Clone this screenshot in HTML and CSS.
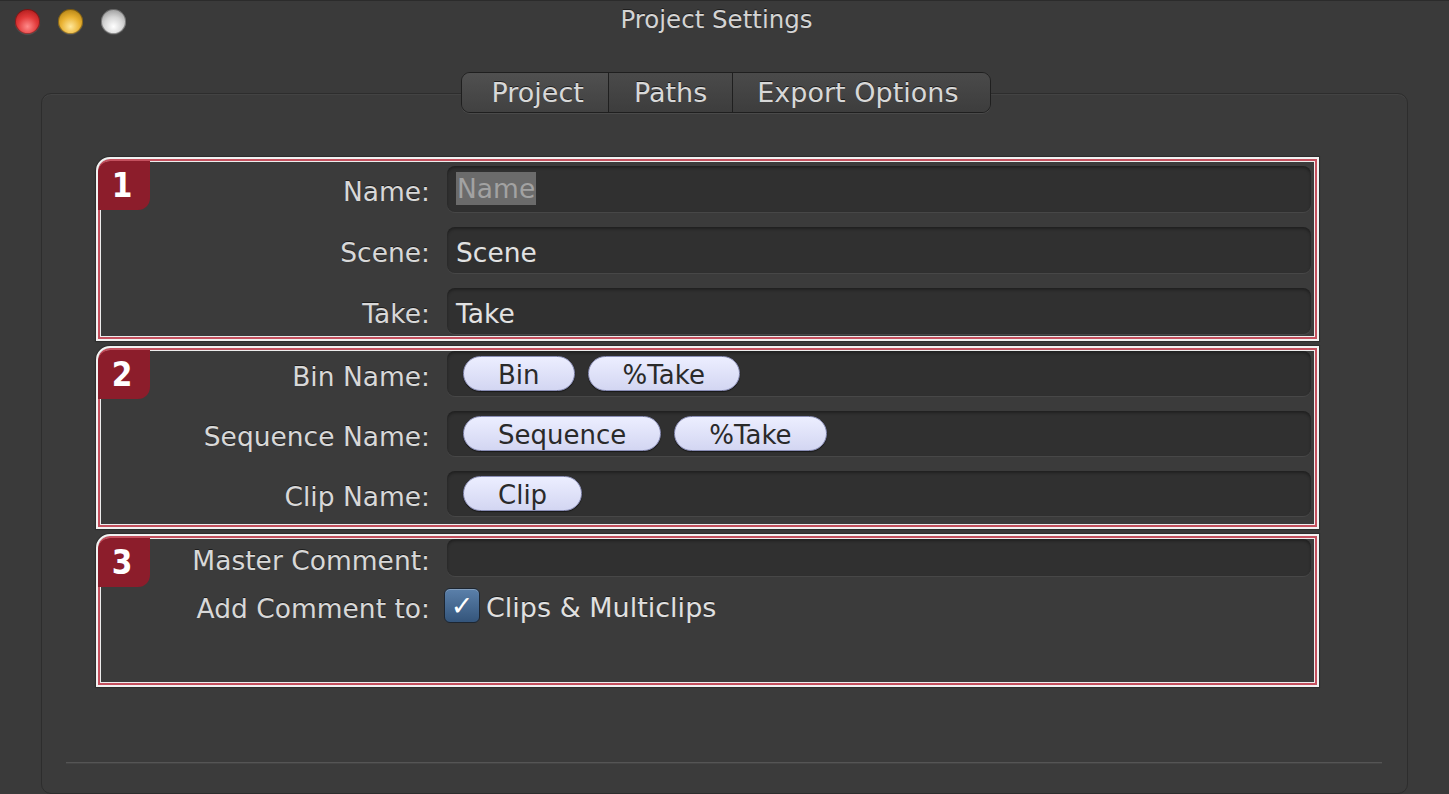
FILE: index.html
```html
<!DOCTYPE html>
<html>
<head>
<meta charset="utf-8">
<title>Project Settings</title>
<link rel="stylesheet" href="styles.css">
</head>
<body>
<div class="window">
  <div class="titlebar">
    <div class="lights">
      <span class="light red"></span>
      <span class="light yellow"></span>
      <span class="light gray"></span>
    </div>
    <div class="title">Project Settings</div>
    <div></div>
  </div>
  <div class="panel">
    <div class="tabs">
      <div class="tab tab-project sel">Project</div>
      <div class="tab tab-paths">Paths</div>
      <div class="tab tab-export">Export Options</div>
    </div>
    <div class="boxes">
      <section class="note n1">
        <div class="badge">1</div>
        <div class="form">
          <div class="label">Name:</div>
          <div class="field"><span class="ph">Name</span></div>
          <div class="label">Scene:</div>
          <div class="field">Scene</div>
          <div class="label">Take:</div>
          <div class="field">Take</div>
        </div>
      </section>
      <section class="note n2">
        <div class="badge">2</div>
        <div class="form">
          <div class="label">Bin Name:</div>
          <div class="field tokens"><span class="pill">Bin</span><span class="pill">%Take</span></div>
          <div class="label">Sequence Name:</div>
          <div class="field tokens"><span class="pill">Sequence</span><span class="pill">%Take</span></div>
          <div class="label">Clip Name:</div>
          <div class="field tokens"><span class="pill">Clip</span></div>
        </div>
      </section>
      <section class="note n3">
        <div class="badge">3</div>
        <div class="form form3">
          <div class="label">Master Comment:</div>
          <div class="field"></div>
          <div class="label">Add Comment to:</div>
          <div class="check-row"><span class="checkbox">&#10003;</span><span class="check-text">Clips &amp; Multiclips</span></div>
        </div>
      </section>
    </div>
    <div class="separator"></div>
  </div>
</div>
</body>
</html>
```

FILE: styles.css
```css
* { box-sizing: border-box; }

html, body {
  margin: 0;
  padding: 0;
}

body {
  width: 1449px;
  height: 794px;
  overflow: hidden;
  background: #3a3a3a;
  font-family: "DejaVu Sans", "Liberation Sans", sans-serif;
  color: #dcdcdc;
}

.window {
  display: flex;
  flex-direction: column;
  height: 794px;
  border-top: 1px solid #2b2b2b;
}

.titlebar {
  height: 43px;
  display: grid;
  grid-template-columns: 1fr auto 1fr;
  align-items: center;
}

.lights {
  display: flex;
  gap: 18px;
  padding-left: 15px;
  padding-top: 1px;
}

.light {
  width: 25px;
  height: 25px;
  border-radius: 50%;
  box-shadow: 0 1px 1px rgba(255,255,255,0.12), inset 0 0 0 1px rgba(0,0,0,0.35);
}

.light.red {
  background: radial-gradient(circle at 50% 70%, #ff8a8a 0%, #e23a3a 45%, #a81616 90%);
}

.light.yellow {
  background: radial-gradient(circle at 50% 70%, #ffe79a 0%, #e9b131 45%, #a97a10 90%);
}

.light.gray {
  background: radial-gradient(circle at 50% 70%, #ffffff 0%, #d4d4d4 45%, #8e8e8e 90%);
}

.title {
  font-size: 24.5px;
  color: #d4d4d4;
  padding-bottom: 2px;
  margin-right: 16px;
  text-shadow: 0 -1px 0 rgba(0,0,0,0.5);
}

.panel {
  margin: 52px 41px 0 41px;
  height: 760px;
  border: 1px solid #2d2d2d;
  border-radius: 10px;
  box-shadow: inset 0 1px 0 #434343;
  background: #3b3b3b;
  display: flex;
  flex-direction: column;
}

.tabs {
  align-self: center;
  display: flex;
  height: 41px;
  margin-top: -22px;
  margin-left: 3px;
  border: 1px solid #1f1f1f;
  border-radius: 9px;
  overflow: hidden;
  box-shadow: 0 1px 0 rgba(255,255,255,0.08);
}

.tab {
  font-size: 27px;
  line-height: 39px;
  color: #d8d8d8;
  background: linear-gradient(#4a4a4a, #3d3d3d);
  border-left: 1px solid #1f1f1f;
  text-shadow: 0 -1px 0 rgba(0,0,0,0.6);
}

.tab-project {
  border-left: none;
  padding: 0 24px 0 30px;
}

.tab-paths {
  padding: 0 25px;
}

.tab-export {
  padding: 0 32px 0 24px;
}

.tab.sel {
  background: linear-gradient(#505050, #414141);
}

.boxes {
  display: flex;
  flex-direction: column;
  gap: 5px;
  margin: 44px 88px 0 54px;
}

.note {
  position: relative;
  border: 2px solid #f2f2f2;
  border-top-left-radius: 14px;
  box-shadow: inset 0 0 0 2px #c4505e, inset 0 0 0 3px #ededed, 0 0 1px 1px rgba(0,0,0,0.25);
}

.n1 { padding: 7px 6px 5px 0; }
.n2 { padding: 3px 6px 11px 0; }
.n3 { padding: 3px 6px 61px 0; }

.badge {
  position: absolute;
  top: 2px;
  left: 0;
  width: 52px;
  height: 49px;
  background: #8c1d2b;
  border-radius: 12px 0 12px 0;
  color: #ffffff;
  font-family: "DejaVu Sans Condensed", "DejaVu Sans", sans-serif;
  font-weight: bold;
  font-size: 33px;
  line-height: 49px;
  text-align: center;
  padding-right: 4px;
}

.form {
  display: grid;
  grid-template-columns: 332px 1fr;
  column-gap: 17px;
  row-gap: 15px;
  grid-auto-rows: 46px;
}

.n2 .form {
  grid-auto-rows: 45px;
}

.form3 {
  grid-template-rows: 37px 36px;
  row-gap: 12px;
}

.label {
  align-self: center;
  text-align: right;
  font-size: 26.5px;
  color: #d8d8d8;
  padding-top: 6px;
  text-shadow: 0 -1px 0 rgba(0,0,0,0.5);
}

.field {
  background: #303030;
  border-radius: 8px;
  box-shadow: inset 0 2px 3px rgba(0,0,0,0.35), 0 1px 0 #474747;
  display: flex;
  align-items: center;
  padding: 6px 9px 0 9px;
  font-size: 26.5px;
  color: #e2e2e2;
}

.ph {
  background: #6b6b6b;
  color: #a2a2a2;
  padding: 0 1px;
  line-height: 33px;
  margin-top: -6px;
}

.tokens {
  padding: 0 16px;
  gap: 13px;
}

.pill {
  height: 35px;
  padding: 0 34px;
  border-radius: 18px;
  background: linear-gradient(#eceeff, #d3d6f2);
  border: 1px solid #8a8eb6;
  box-shadow: 0 1px 1px rgba(0,0,0,0.5);
  color: #2a2a2a;
  font-size: 26px;
  line-height: 37px;
}

.check-row {
  display: flex;
  align-items: center;
  gap: 6px;
  margin-left: -3px;
}

.checkbox {
  width: 36px;
  height: 35px;
  border-radius: 6px;
  border: 1px solid #1d2631;
  background: linear-gradient(#5b80aa, #34557b);
  color: #ffffff;
  font-size: 27px;
  line-height: 33px;
  text-align: center;
  font-weight: bold;
  box-shadow: inset 0 1px 0 rgba(255,255,255,0.25);
}

.check-text {
  font-size: 27px;
  color: #e0e0e0;
  padding-top: 4px;
  text-shadow: 0 -1px 0 rgba(0,0,0,0.5);
}

.separator {
  margin: 75px 25px 0 24px;
  height: 2px;
  background: #555555;
  border-bottom: 1px solid #444;
}
```
